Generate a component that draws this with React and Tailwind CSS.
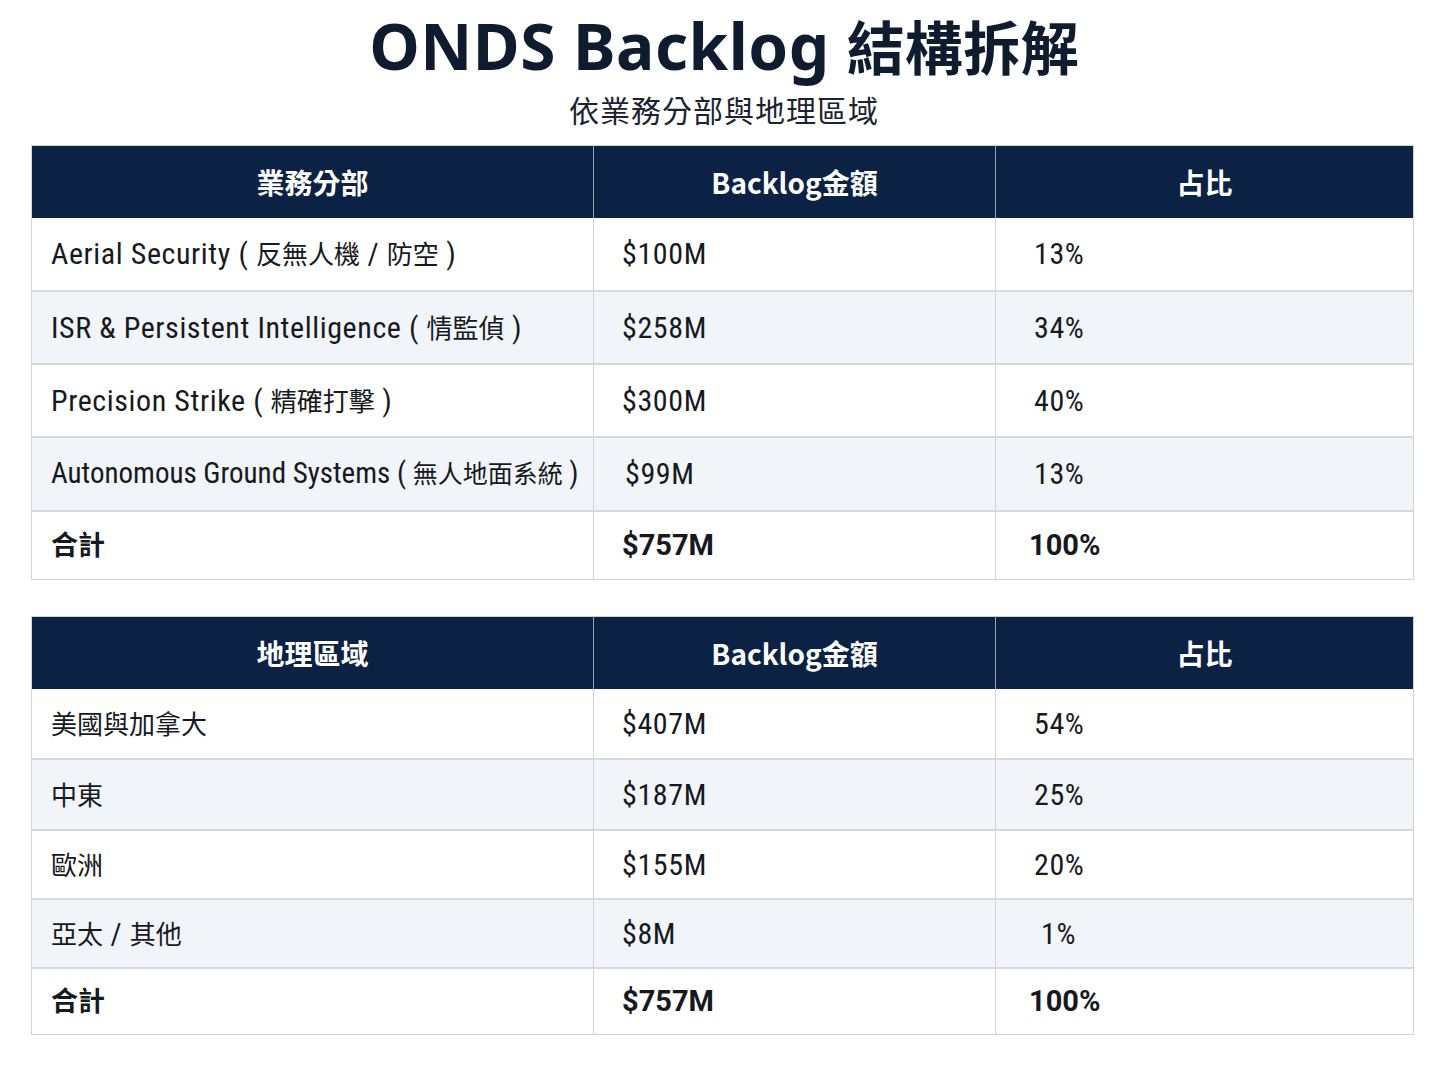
import React from "react";

const CJK = { fontFamily: '"Noto Sans CJK TC", "Noto Sans", sans-serif' };
const NARROW = { fontFamily: 'Roboto, "Noto Sans CJK TC", sans-serif' };

function Mixed({ text, small }) {
  const parts = text.match(/([\u3000-\u9fff\uff00-\uffef]+|[^\u3000-\u9fff\uff00-\uffef]+)/g) || [];
  return (
    <>
      {parts.map((p, i) =>
        /[\u3000-\u9fff\uff00-\uffef]/.test(p) ? (
          <span key={i} className={`${small ? "text-[25px]" : "text-[26px]"} tracking-normal [font-stretch:100%]`} style={CJK}>{p}</span>
        ) : (
          <span key={i}>{p}</span>
        )
      )}
    </>
  );
}

const seg = [
  { a: "Aerial Security ( 反無人機 / 防空 )", b: "$100M", c: "13%", h: "h-[73px]" },
  { a: "ISR & Persistent Intelligence ( 情監偵 )", b: "$258M", c: "34%", h: "h-[73px]" },
  { a: "Precision Strike ( 精確打擊 )", b: "$300M", c: "40%", h: "h-[73px]" },
  { a: "Autonomous Ground Systems ( 無人地面系統 )", b: "$99M", c: "13%", h: "h-[74px]", bp: "pl-[31px]", as: "text-[29px] tracking-normal", small: true },
];

const geo = [
  { a: "美國與加拿大", b: "$407M", c: "54%", h: "h-[70px]" },
  { a: "中東", b: "$187M", c: "25%", h: "h-[71px]" },
  { a: "歐洲", b: "$155M", c: "20%", h: "h-[69px]" },
  { a: "亞太 / 其他", b: "$8M", c: "1%", h: "h-[69px]", cp: "pl-[45px]" },
];

function Table({ head, rows, totalH }) {
  return (
    <table className="border-collapse table-fixed w-[1382px] ml-[31px] border border-[#cfd4db]">
      <colgroup>
        <col className="w-[562px]" />
        <col className="w-[402px]" />
        <col className="w-[418px]" />
      </colgroup>
      <thead>
        <tr className="h-[72px] bg-[#0b2245] text-white text-[28px] font-bold" style={CJK}>
          <th className="border-r border-[#9aa4b4] text-center align-middle">{head}</th>
          <th className="border-r border-[#9aa4b4] text-center align-middle">Backlog金額</th>
          <th className="text-center align-middle">占比</th>
        </tr>
      </thead>
      <tbody className="text-[30px] tracking-[0.6px] text-[#161a20] [font-stretch:75%]" style={NARROW}>
        {rows.map((r, i) => (
          <tr key={i} className={`${r.h} ${i % 2 === 1 ? "bg-[#f1f4f8]" : "bg-white"} border-b-2 border-[#d5d9df]`}>
            <td className={`${r.as || ""} pl-[19px] border-r border-[#cfd4db] align-middle whitespace-nowrap overflow-hidden`}>
              <Mixed text={r.a} small={r.small} />
            </td>
            <td className={`${r.bp || "pl-[28px]"} border-r border-[#cfd4db] align-middle`}>{r.b}</td>
            <td className={`${r.cp || "pl-[38px]"} align-middle`}>{r.c}</td>
          </tr>
        ))}
        <tr className={`${totalH} bg-white font-bold tracking-normal text-[29px] [font-stretch:90%]`}>
          <td className="pl-[19px] border-r border-[#cfd4db] align-middle">
            <span className="text-[27px] [font-stretch:100%]" style={CJK}>合計</span>
          </td>
          <td className="pl-[28px] border-r border-[#cfd4db] align-middle">$757M</td>
          <td className="pl-[33px] align-middle">100%</td>
        </tr>
      </tbody>
    </table>
  );
}

export default function App() {
  return (
    <div className="w-[1448px] h-[1086px] bg-white overflow-hidden">
      <h1
        className="h-[90px] pt-[6px] text-center leading-[78px] text-[#0f1b2e] font-bold whitespace-nowrap"
        style={{ fontFamily: '"Noto Sans", "Noto Sans CJK TC", sans-serif' }}
      >
        <span className="text-[64px] tracking-[0.5px]">ONDS Backlog </span>
        <span className="text-[58px]" style={CJK}>結構拆解</span>
      </h1>
      <div className="text-center text-[30px] leading-[38px] text-[#1c2230] tracking-[1px]" style={CJK}>
        依業務分部與地理區域
      </div>
      <div className="mt-[17px]">
        <Table head="業務分部" rows={seg} totalH="h-[69px]" />
      </div>
      <div className="mt-[36px]">
        <Table head="地理區域" rows={geo} totalH="h-[67px]" />
      </div>
    </div>
  );
}
